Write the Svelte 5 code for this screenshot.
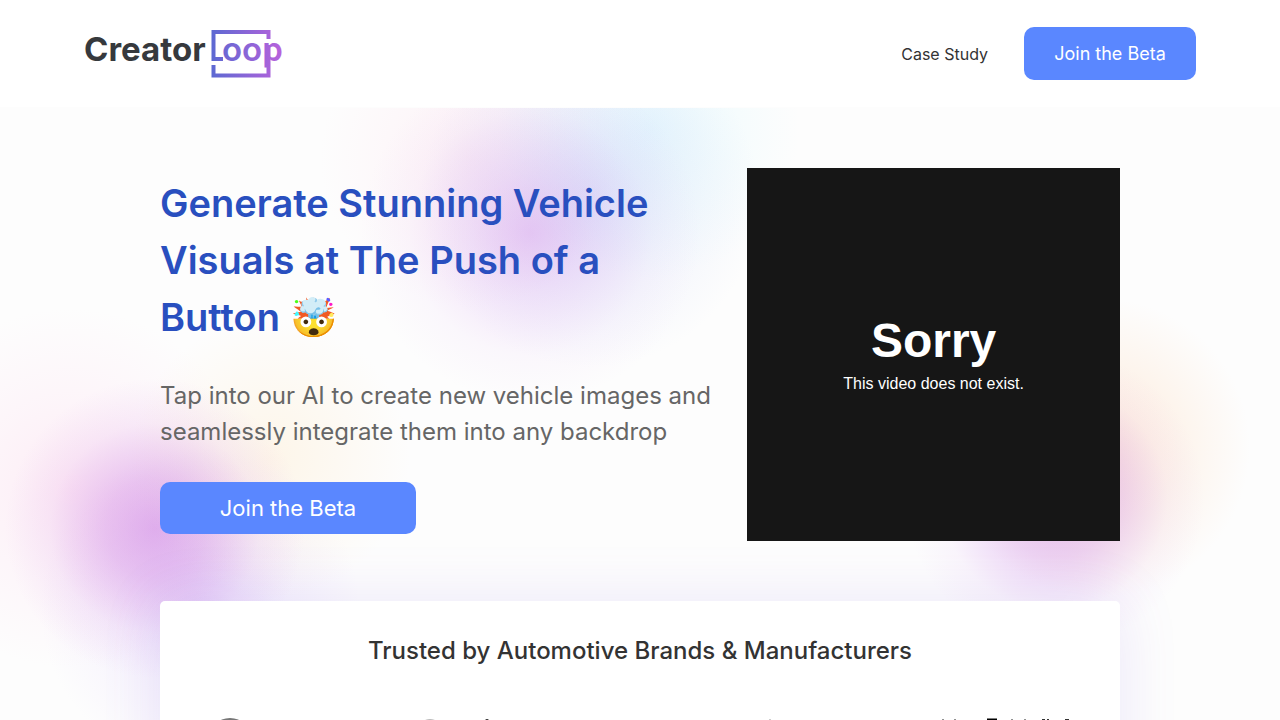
<script>
  export let trustedTitle = 'Trusted by Automotive Brands & Manufacturers';
  export let videoTitle = 'Sorry';
  export let videoMessage = 'This video does not exist.';
</script>

<header class="header">
  <a class="logo" href="/" aria-label="CreatorLoop">
    <svg width="202" height="49" viewBox="0 0 202 49" aria-hidden="true">
      <defs>
        <linearGradient id="loop" gradientUnits="userSpaceOnUse" x1="127" y1="0" x2="200" y2="0">
          <stop offset="0" stop-color="#5c69d2" />
          <stop offset="1" stop-color="#ba62dc" />
        </linearGradient>
      </defs>
      <text x="0" y="32" class="logo-name">Creator</text>
      <path
        d="M139 30H129.500V3H184.500V10M129.500 36V46.500H184.500V16"
        fill="none"
        stroke="url(#loop)"
        stroke-width="4"
      />
      <text x="138" y="32" class="logo-loop" fill="url(#loop)">oop</text>
    </svg>
  </a>
  <nav class="nav">
    <a class="nav-link" href="#case-study">Case Study</a>
    <button class="btn btn-nav" type="button">Join the Beta</button>
  </nav>
</header>

<main class="page">
  <section class="hero">
    <div class="intro">
      <h1>Generate Stunning Vehicle Visuals at The Push of a Button 🤯</h1>
      <p>Tap into our AI to create new vehicle images and seamlessly integrate them into any backdrop</p>
      <button class="btn btn-hero" type="button">Join the Beta</button>
    </div>
    <div class="video">
      <h2>{videoTitle}</h2>
      <p>{videoMessage}</p>
    </div>
  </section>

  <section class="trusted">
    <h2>{trustedTitle}</h2>
    <div class="brands">
      <svg viewBox="0 0 160 48" aria-hidden="true">
        <circle cx="30" cy="22" r="20" fill="none" stroke="#777" stroke-width="2" />
      </svg>
      <svg viewBox="0 0 160 48" aria-hidden="true">
        <circle cx="50" cy="13" r="10" fill="none" stroke="#bbb" stroke-width="2" />
        <circle cx="107" cy="4" r="2" fill="#222" />
      </svg>
      <svg viewBox="0 0 160 48" aria-hidden="true"></svg>
      <svg viewBox="0 0 160 48" aria-hidden="true">
        <path d="M30 2V14" stroke="#ccc" stroke-width="2" />
      </svg>
      <svg viewBox="0 0 160 48" aria-hidden="true">
        <path d="M23 2V14M35 2V14M92 2V14M105 2V14" stroke="#222" />
        <path d="M67 3H77M72 3V14" stroke="#000" stroke-width="3" />
        <path d="M122 3H125M128 2V4M145 3H149" stroke="#333" stroke-width="2" />
      </svg>
    </div>
  </section>
</main>

<style>
:global(body) {
  font-family: Inter, "Liberation Sans", sans-serif;
  color: #333;
  background: #fdfdfd;
}
.header {
  display: flex;
  align-items: center;
  justify-content: space-between;
  height: 107px;
  padding: 0 84px;
  border-bottom: 1px solid #fdfdfd;
  background: #fff;
}
.logo svg {
  display: block;
}
.logo-name {
  font-family: Inter, sans-serif;
  font-size: 33px;
  font-weight: 700;
  fill: #36393d;
}
.logo-loop {
  font-family: Inter, sans-serif;
  font-size: 33px;
  font-weight: 600;
}
.nav {
  display: flex;
  align-items: center;
  gap: 36px;
}
.nav-link {
  color: #333;
  font-size: 16px;
  text-decoration: none;
}
.btn {
  padding: 0;
  border: 0;
  border-radius: 10px;
  background: #5a87ff;
  color: #fff;
  font-family: inherit;
  cursor: pointer;
}
.btn-nav {
  width: 172px;
  height: 53px;
  font-size: 18px;
}
.btn-hero {
  width: 256px;
  height: 52px;
  font-size: 22px;
}
.page {
  padding: 60px 24px;
  background:
    radial-gradient(circle 150px at 155px 420px, rgba(202, 120, 226, 0.55), rgba(202, 120, 226, 0.38) 33%, rgba(202, 120, 226, 0.1) 70%, transparent),
    radial-gradient(circle 140px at 270px 350px, rgba(255, 226, 180, 0.28), rgba(255, 226, 180, 0.14) 50%, transparent),
    radial-gradient(circle 180px at 70px 380px, rgba(255, 190, 225, 0.28), rgba(255, 190, 225, 0.12) 50%, transparent),
    radial-gradient(circle 160px at 200px 500px, rgba(200, 170, 250, 0.3), rgba(200, 170, 250, 0.12) 50%, transparent),
    radial-gradient(circle 170px at 530px 125px, rgba(208, 130, 232, 0.38), rgba(208, 140, 235, 0.22) 35%, rgba(208, 150, 235, 0.06) 72%, transparent),
    radial-gradient(circle 170px at 590px 90px, rgba(165, 185, 245, 0.28), rgba(165, 185, 245, 0.12) 50%, transparent),
    radial-gradient(circle 150px at 650px 20px, rgba(190, 240, 255, 0.3), rgba(190, 245, 255, 0.14) 50%, transparent),
    radial-gradient(circle 150px at 470px 50px, rgba(255, 205, 225, 0.25), rgba(255, 205, 225, 0.12) 50%, transparent),
    radial-gradient(circle 150px at 1055px 390px, rgba(200, 120, 230, 0.5), rgba(200, 120, 230, 0.3) 40%, rgba(200, 120, 230, 0.06) 75%, transparent),
    radial-gradient(circle 150px at 1100px 340px, rgba(255, 215, 180, 0.45), rgba(255, 215, 180, 0.25) 50%, transparent);
}
.hero {
  display: grid;
  grid-template-columns: 3fr 2fr;
  align-items: center;
  gap: 28px;
  max-width: 960px;
  margin: 0 auto 60px;
}
.intro {
  display: flex;
  flex-direction: column;
  align-items: flex-start;
  gap: 32px;
}
.intro h1 {
  margin: 0;
  color: #294fbf;
  font-size: 38px;
  font-weight: 600;
  line-height: 57px;
}
.intro p {
  margin: 0;
  color: #666;
  font-size: 24px;
  line-height: 36px;
}
.video {
  display: flex;
  flex-direction: column;
  align-items: center;
  justify-content: center;
  aspect-ratio: 1;
  background: #161616;
  color: #fff;
  font-family: "Liberation Sans", Arial, sans-serif;
}
.video h2 {
  margin: 0;
  font-size: 48px;
  line-height: 60px;
}
.video p {
  margin: 0;
  font-size: 16px;
  line-height: 26px;
}
.trusted {
  box-sizing: border-box;
  max-width: 960px;
  margin: 0 auto;
  padding: 32px 40px;
  border-radius: 5px;
  background: #fff;
  box-shadow: 0 0 60px rgba(130, 90, 220, 0.14);
}
.trusted h2 {
  margin: 0;
  font-size: 24px;
  font-weight: 500;
  line-height: 36px;
  text-align: center;
}
.brands {
  display: grid;
  grid-template-columns: repeat(5, 1fr);
  gap: 20px;
  padding-top: 48px;
}
.brands svg {
  width: 100%;
}
</style>
